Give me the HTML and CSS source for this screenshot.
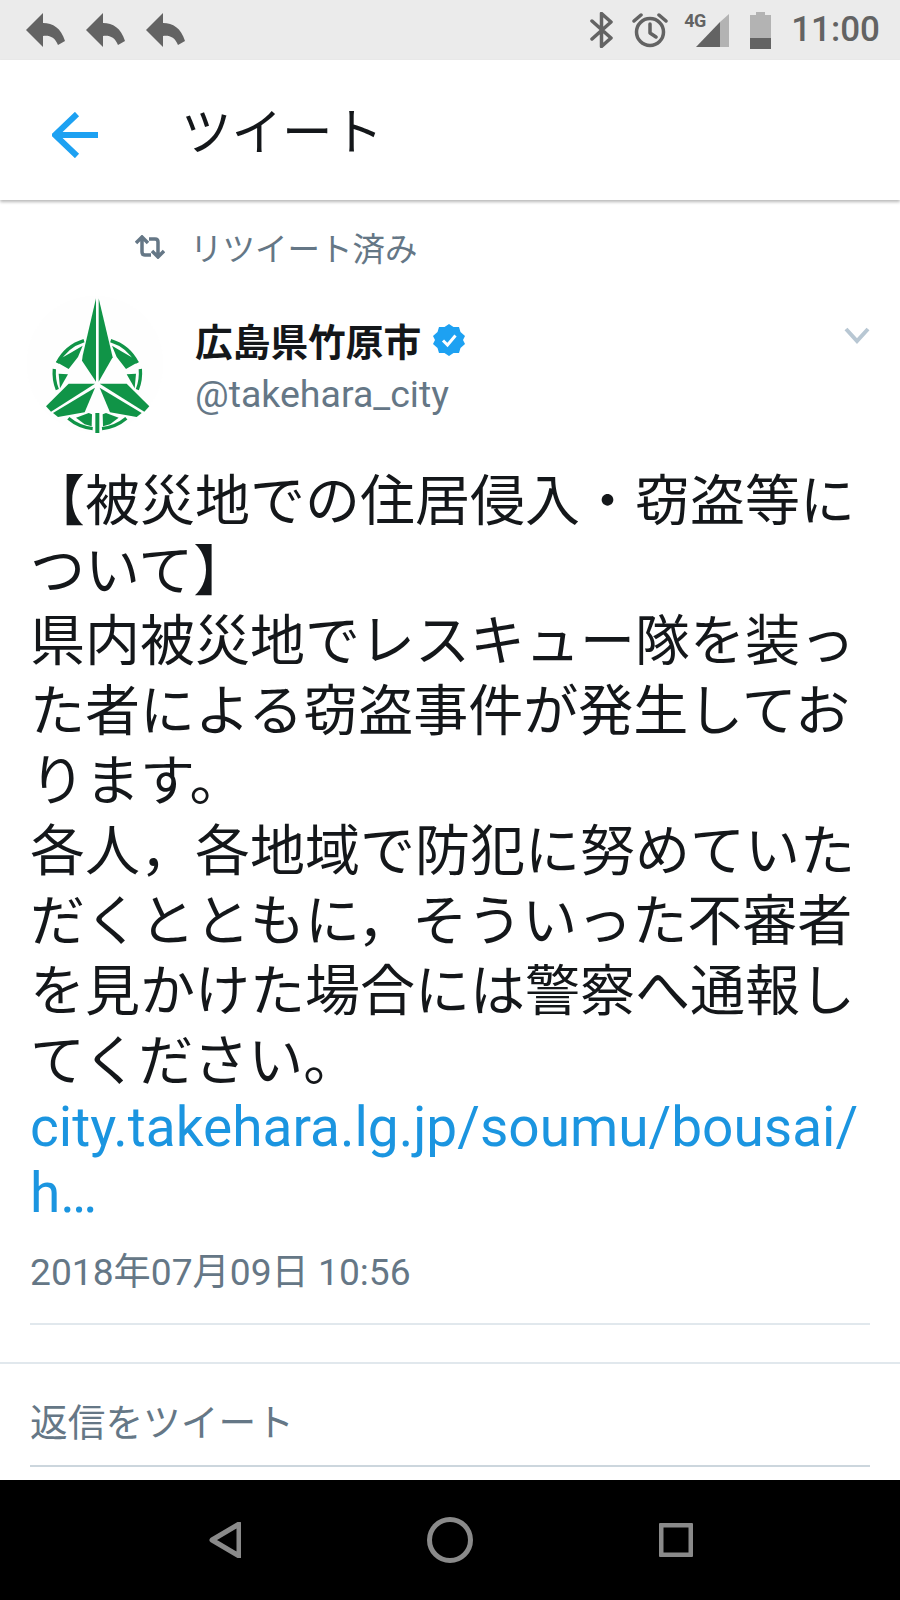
FILE: index.html
```html
<!DOCTYPE html>
<html lang="ja">
<head>
<meta charset="utf-8">
<title>ツイート</title>
<link rel="stylesheet" href="styles.css">
</head>
<body>
<div class="screen">
  <div class="status">
    <div class="notifs">
      <svg class="reply-ic" viewBox="0 0 39 34"><path d="M17 0 0 17 17 34V23C23 22 29 24 32 32L39 28C35 15 27 10 17 10Z"/></svg>
      <svg class="reply-ic" viewBox="0 0 39 34"><path d="M17 0 0 17 17 34V23C23 22 29 24 32 32L39 28C35 15 27 10 17 10Z"/></svg>
      <svg class="reply-ic" viewBox="0 0 39 34"><path d="M17 0 0 17 17 34V23C23 22 29 24 32 32L39 28C35 15 27 10 17 10Z"/></svg>
    </div>
    <div class="sys">
      <svg class="bt" viewBox="0 0 23 36"><path class="st" d="M2 9 21 26 11.500 34.500V1.500L21 10 2 27"/></svg>
      <svg class="alarm" viewBox="0 0 36 36"><circle class="st" cx="18" cy="20" r="13.500"/><path class="st" d="M18 12V21L24 25M2 9 9 3M34 9 27 3"/></svg>
      <div class="signal">
        <span class="four-g">4G</span>
        <svg class="bars" viewBox="0 0 33 33"><path class="dim" d="M33 0V33H24V8Z"/><path class="dark" d="M24 8V33H0Z"/></svg>
      </div>
      <svg class="batt" viewBox="0 0 21 37"><path class="dim" d="M6 0H15V3H21V26H0V3H6Z"/><path class="dark" d="M0 26H21V37H0Z"/></svg>
      <span class="time">11:00</span>
    </div>
  </div>

  <header class="bar">
    <svg class="back" viewBox="0 0 46 46"><path d="M25 2 3 23 25 44M3 23H46"/></svg>
    <h1 class="title">ツイート</h1>
  </header>

  <main class="content">
    <div class="rt">
      <svg class="rt-ic" viewBox="0 0 30 24"><path d="M1 8 7 2 13 8M7 3V17Q7 20 10 20H16M29 16 23 22 17 16M23 21V7Q23 4 20 4H14"/></svg>
      <span>リツイート済み</span>
    </div>

    <div class="author">
      <svg class="avatar" viewBox="0 0 450 450">
        <circle class="av-bg" cx="225" cy="225" r="205"/>
        <g class="ring">
          <path d="M192 155A135 135 0 0 0 112 222"/>
          <path d="M272 155A135 135 0 0 1 352 222"/>
          <path d="M103 240A135 135 0 0 0 112 302"/>
          <path d="M361 240A135 135 0 0 1 352 302"/>
          <path d="M145 388A135 135 0 0 0 218 419"/>
          <path d="M319 388A135 135 0 0 1 246 419"/>
        </g>
        <g class="logo">
          <path d="M228 28 188 200 186 215 228 278Z"/>
          <path d="M236 28 278 205 236 278Z"/>
          <path d="M225 284H146L78 352 93 368Z"/>
          <path d="M225 296 99 372 114 384 194 370Z"/>
          <path d="M239 284H320L388 352 373 368Z"/>
          <path d="M239 296 365 372 350 384 270 370Z"/>
          <path d="M188 170 174 204 146 240 108 218 126 206 155 190Z"/>
          <path d="M276 170 290 204 318 240 356 218 338 206 309 190Z"/>
          <path d="M116 254 144 256 120 298Z"/>
          <path d="M348 254 320 256 344 298Z"/>
          <path d="M168 386 206 372 216 376 215 412 194 406Z"/>
          <path d="M296 386 258 372 248 376 249 412 270 406Z"/>
          <path d="M226 372H238V432H226Z"/>
        </g>
      </svg>
      <div class="who">
        <div class="name-row">
          <span class="name">広島県竹原市</span>
          <svg class="badge" viewBox="0 0 32 32"><path class="badge-bg" d="M16 0 20.500 3 26 3 27.500 8 32 12 30 16 32 20 27.500 24 26 29 20.500 29 16 32 11.500 29 6 29 4.500 24 0 20 2 16 0 12 4.500 8 6 3 11.500 3Z"/><path class="badge-ck" d="M10 16.500 14.500 21 22.500 11.500"/></svg>
        </div>
        <div class="handle">@takehara_city</div>
      </div>
      <svg class="chev" viewBox="0 0 26 18"><path d="M2 3 13 15 24 3"/></svg>
    </div>

    <div class="tweet">
      <p class="body">【被災地での住居侵入・窃盗等について】<br>県内被災地でレスキュー隊を装った者による窃盗事件が発生しております。<br>各人，各地域で防犯に努めていただくとともに，そういった不審者を見かけた場合には警察へ通報してください。</p>
      <p class="link">city.takehara.lg.jp/soumu/bousai/h…</p>
      <p class="date">2018年07月09日 10:56</p>
      <div class="rule"></div>
    </div>

    <div class="sep"></div>

    <div class="reply">
      <div class="reply-input">返信をツイート</div>
    </div>
  </main>

  <nav class="nav">
    <svg class="nav-ic nav-back" viewBox="0 0 32 36"><path d="M30 2V34L3 18Z"/></svg>
    <svg class="nav-ic nav-home" viewBox="0 0 46 46"><circle cx="23" cy="23" r="20.500"/></svg>
    <svg class="nav-ic nav-rec" viewBox="0 0 34 34"><rect x="2" y="2" width="30" height="30" rx="1"/></svg>
  </nav>
</div>
</body>
</html>
```
FILE: styles.css
```css
* { box-sizing: border-box; }
html, body { margin: 0; padding: 0; background: #fff; }
body { font-family: Roboto, "Noto Sans CJK JP", sans-serif; }
p, h1 { margin: 0; }

.screen { width: 900px; height: 1600px; display: flex; flex-direction: column; overflow: hidden; }

/* status bar */
.status { height: 60px; flex: none; background: #ebebeb; display: flex; justify-content: space-between; align-items: center; padding: 0 20px 0 26px; }
.notifs { display: flex; gap: 21px; }
.reply-ic { width: 39px; height: 34px; fill: #636363; display: block; }
.sys { display: flex; align-items: center; }
.st { fill: none; stroke: #636363; stroke-width: 3.5; stroke-linecap: round; stroke-linejoin: round; }
.dim { fill: #b3b3b3; }
.dark { fill: #636363; }
.bt { width: 23px; height: 36px; display: block; }
.alarm { width: 36px; height: 36px; display: block; margin-left: 19px; }
.signal { width: 44px; height: 36px; margin-left: 17px; position: relative; display: flex; justify-content: flex-end; align-items: center; }
.four-g { position: absolute; left: -1px; top: -1px; font: 700 18px/20px Roboto, sans-serif; letter-spacing: -.5px; color: #636363; }
.bars { width: 33px; height: 33px; display: block; }
.batt { width: 21px; height: 37px; display: block; margin-left: 21px; }
.time { font: 500 35px/40px Roboto, sans-serif; color: #636363; margin-left: 20px; }

/* app bar */
.bar { height: 140px; flex: none; background: #fff; display: flex; align-items: center; padding-left: 52px; box-shadow: 0 2px 3px rgba(0,0,0,.28); position: relative; }
.back { width: 46px; height: 46px; display: block; fill: none; stroke: #1da1f2; stroke-width: 6; margin-top: 10px; }
.title { font: 400 50.5px/60px "Noto Sans CJK JP", sans-serif; color: #14171a; margin: 0 0 4px 83px; }

/* content */
.content { flex: 1; display: flex; flex-direction: column; background: #fff; }
.rt { display: flex; align-items: center; height: 34px; margin-top: 30px; padding-left: 135px; color: #657786; font: 400 32.5px/34px "Noto Sans CJK JP", sans-serif; }
.rt-ic { width: 30px; height: 24px; fill: none; stroke: #657786; stroke-width: 3.500; margin-right: 25px; display: block; }

.author { display: flex; margin-top: 25px; padding-left: 20px; height: 150px; }
.avatar { width: 150px; height: 150px; display: block; flex: none; }
.av-bg { fill: #fefefe; }
.logo { fill: #109447; }
.ring { fill: none; stroke: #109447; stroke-width: 10; }
.who { margin-left: 25px; padding-top: 28px; }
.name-row { display: flex; align-items: center; height: 46px; }
.name { font: 700 37.7px/46px "Noto Sans CJK JP", sans-serif; color: #14171a; }
.badge { width: 32px; height: 32px; margin-left: 12px; display: block; }
.badge-bg { fill: #1da1f2; }
.badge-ck { fill: none; stroke: #fff; stroke-width: 3; }
.handle { font: 400 37.5px/46px Roboto, "Noto Sans CJK JP", sans-serif; color: #657786; margin-top: 8px; }
.chev { width: 26px; height: 18px; margin: 37px 30px 0 auto; fill: none; stroke: #b8c7d3; stroke-width: 4; display: block; }

.tweet { padding: 22px 30px 0; }
.body { font: 400 55px/70px "Noto Sans CJK JP", sans-serif; color: #14171a; }
.link { font: 400 55px/66px Roboto, sans-serif; color: #1b95e0; word-break: break-all; margin-top: 3px; }
.date { font: 400 37.2px/44px Roboto, "Noto Sans CJK JP", sans-serif; color: #657786; margin-top: 24px; }
.rule { height: 2px; background: #e1e8ed; margin-top: 29px; }
.sep { height: 2px; background: #e1e8ed; margin-top: 37px; }
.reply { padding: 33px 30px 0; }
.reply-input { font: 400 37.7px/46px "Noto Sans CJK JP", sans-serif; color: #657786; height: 70px; border-bottom: 2px solid #ccd6dd; }

/* nav bar */
.nav { height: 120px; flex: none; background: #000; position: relative; display: flex; align-items: center; }
.nav-ic { display: block; fill: none; stroke: #8a8a8a; stroke-width: 5; stroke-linejoin: round; }
.nav-back { width: 32px; height: 36px; margin-left: 209px; }
.nav-home { width: 46px; height: 46px; margin-left: 186px; }
.nav-rec { width: 34px; height: 34px; margin-left: 186px; }
```
